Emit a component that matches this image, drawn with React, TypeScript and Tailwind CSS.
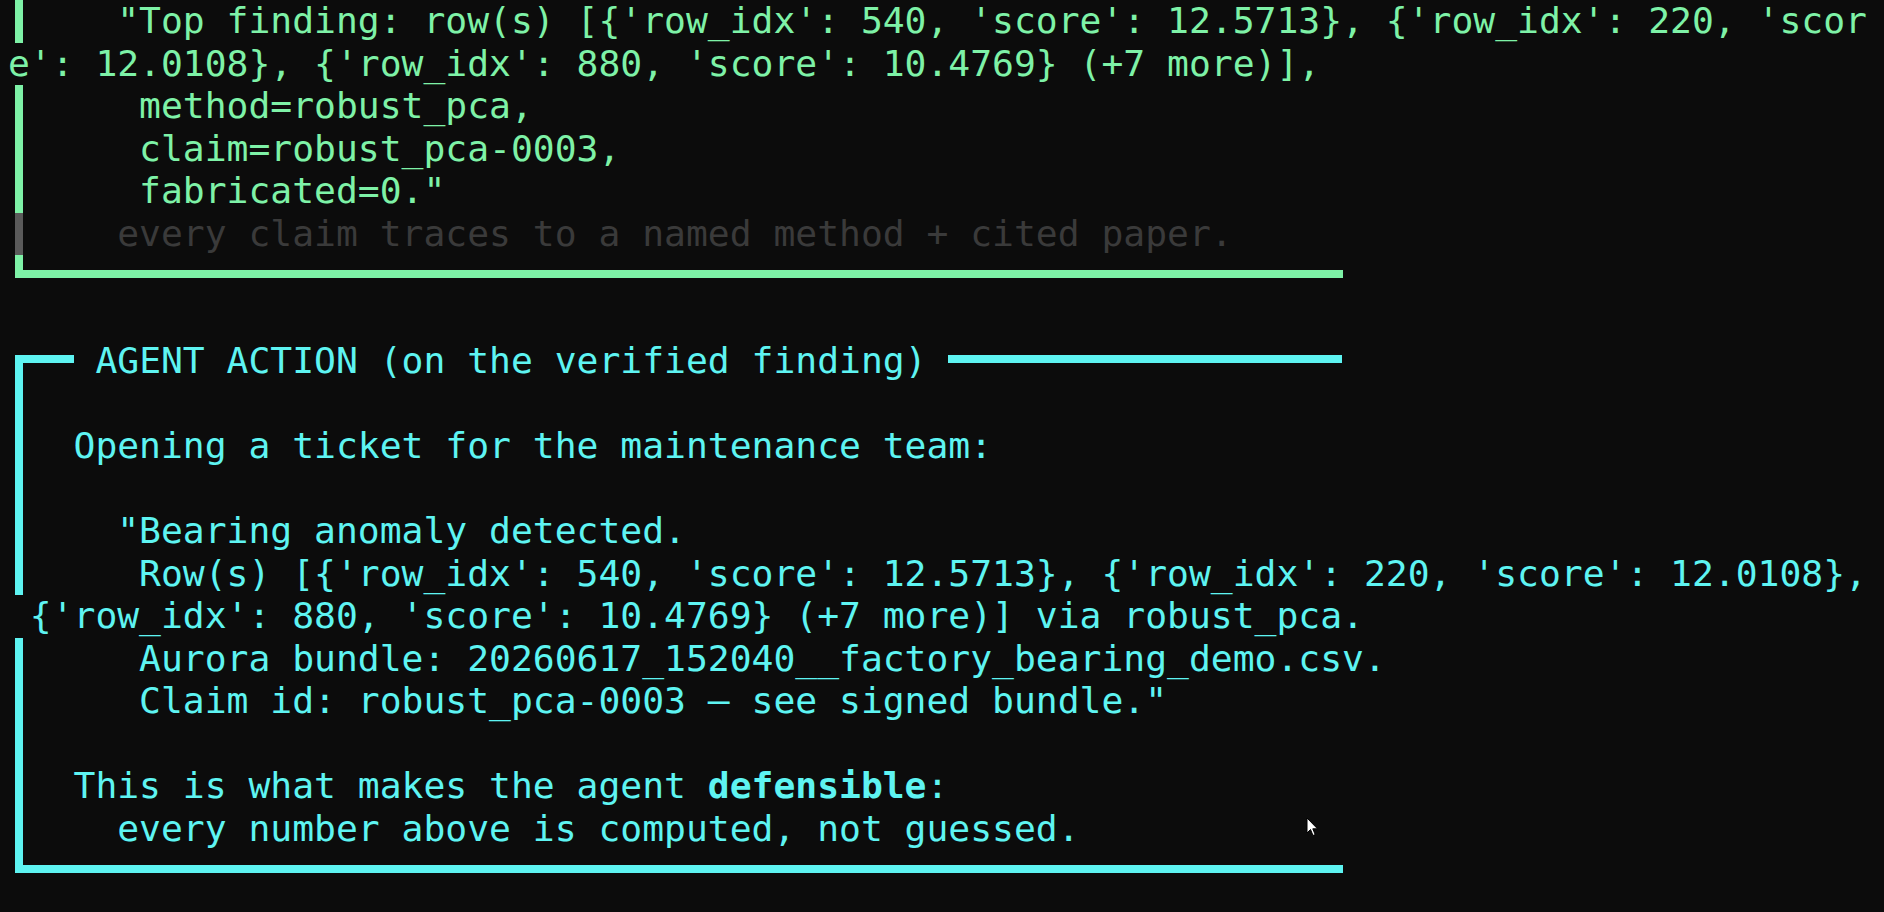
import React from "react";

const GREEN = "bg-[#7ef2a7]";
const CYAN = "bg-[#5ef4f2]";

type Bar = "full" | "none" | "gray";

function Row({
  bar,
  color,
  text,
  children,
}: {
  bar: Bar;
  color: "green" | "cyan";
  text?: string;
  children?: React.ReactNode;
}) {
  const barBg = bar === "gray" ? "bg-[#5a5a5a]" : color === "green" ? GREEN : CYAN;
  return (
    <div className="flex h-[42.5px] items-stretch">
      {bar !== "none" && (
        <div className="w-[21.88px] shrink-0 pl-[7px] flex">
          <div className={`w-[8px] ${barBg}`} />
        </div>
      )}
      <div className="whitespace-pre leading-[42.5px]">{children ?? text}</div>
    </div>
  );
}

function TopCorner({ bg }: { bg: string }) {
  return (
    <div className="w-[21.88px] shrink-0 pl-[7px] flex flex-col">
      <div className="h-[15px]" />
      <div className="flex-1 flex">
        <div className={`w-[8px] ${bg}`} />
        <div className={`flex-1 h-[8px] ${bg}`} />
      </div>
    </div>
  );
}

function BottomCorner({ bg }: { bg: string }) {
  return (
    <div className="w-[21.88px] shrink-0 pl-[7px] flex flex-col">
      <div className="h-[23px] flex">
        <div className={`w-[8px] ${bg}`} />
        <div className="flex-1 flex flex-col">
          <div className="h-[15px]" />
          <div className={`flex-1 ${bg}`} />
        </div>
      </div>
    </div>
  );
}

function Cursor() {
  return (
    <svg
      className="absolute left-[1306px] top-[817px]"
      width="13"
      height="20"
      viewBox="0 0 13 20"
    >
      <path
        d="M1 1 L1 16 L4.5 12.5 L7 18.5 L9.2 17.6 L6.8 11.8 L11.5 11.8 Z"
        fill="#ffffff"
        stroke="#000000"
        strokeWidth="1"
        strokeLinejoin="round"
      />
    </svg>
  );
}

export default function App() {
  return (
    <div className="relative w-full h-[912px] overflow-hidden bg-[#0c0c0c] font-['DejaVu_Sans_Mono',monospace] text-[36.34px]">
      <div className="pl-[7.9px] pt-0">
        {/* Green section */}
        <div className="text-[#7ef2a7]">
          <Row
            bar="full"
            color="green"
            text={`    "Top finding: row(s) [{'row_idx': 540, 'score': 12.5713}, {'row_idx': 220, 'scor`}
          />
          <Row
            bar="none"
            color="green"
            text={`e': 12.0108}, {'row_idx': 880, 'score': 10.4769} (+7 more)],`}
          />
          <Row bar="full" color="green" text={`     method=robust_pca,`} />
          <Row bar="full" color="green" text={`     claim=robust_pca-0003,`} />
          <Row bar="full" color="green" text={`     fabricated=0."`} />
          <div className="text-[#3a3a3a]">
            <Row
              bar="gray"
              color="green"
              text={`    every claim traces to a named method + cited paper.`}
            />
          </div>
          <div className="flex h-[42.5px] items-start">
            <BottomCorner bg={GREEN} />
            <div className={`mt-[15px] h-[8px] w-[1312.8px] ${GREEN}`} />
          </div>
        </div>

        {/* blank */}
        <div className="h-[42.5px]" />

        {/* Cyan section */}
        <div className="text-[#5ef4f2]">
          <div className="flex h-[42.5px] items-stretch">
            <TopCorner bg={CYAN} />
            <div className={`mt-[15px] h-[8px] w-[43.76px] ${CYAN}`} />
            <div className="whitespace-pre leading-[42.5px]">
              {" AGENT ACTION (on the verified finding) "}
            </div>
            <div className={`mt-[15px] h-[8px] w-[393.84px] ${CYAN}`} />
          </div>
          <Row bar="full" color="cyan" text="" />
          <Row bar="full" color="cyan" text={`  Opening a ticket for the maintenance team:`} />
          <Row bar="full" color="cyan" text="" />
          <Row bar="full" color="cyan" text={`    "Bearing anomaly detected.`} />
          <Row
            bar="full"
            color="cyan"
            text={`     Row(s) [{'row_idx': 540, 'score': 12.5713}, {'row_idx': 220, 'score': 12.0108},`}
          />
          <Row
            bar="none"
            color="cyan"
            text={` {'row_idx': 880, 'score': 10.4769} (+7 more)] via robust_pca.`}
          />
          <Row
            bar="full"
            color="cyan"
            text={`     Aurora bundle: 20260617_152040__factory_bearing_demo.csv.`}
          />
          <Row
            bar="full"
            color="cyan"
            text={`     Claim id: robust_pca-0003 — see signed bundle."`}
          />
          <Row bar="full" color="cyan" text="" />
          <Row bar="full" color="cyan">
            {`  This is what makes the agent `}
            <span className="font-bold">defensible</span>
            {`:`}
          </Row>
          <Row
            bar="full"
            color="cyan"
            text={`    every number above is computed, not guessed.`}
          />
          <div className="flex h-[42.5px] items-start">
            <BottomCorner bg={CYAN} />
            <div className={`mt-[15px] h-[8px] w-[1312.8px] ${CYAN}`} />
          </div>
        </div>
      </div>
      <Cursor />
    </div>
  );
}
